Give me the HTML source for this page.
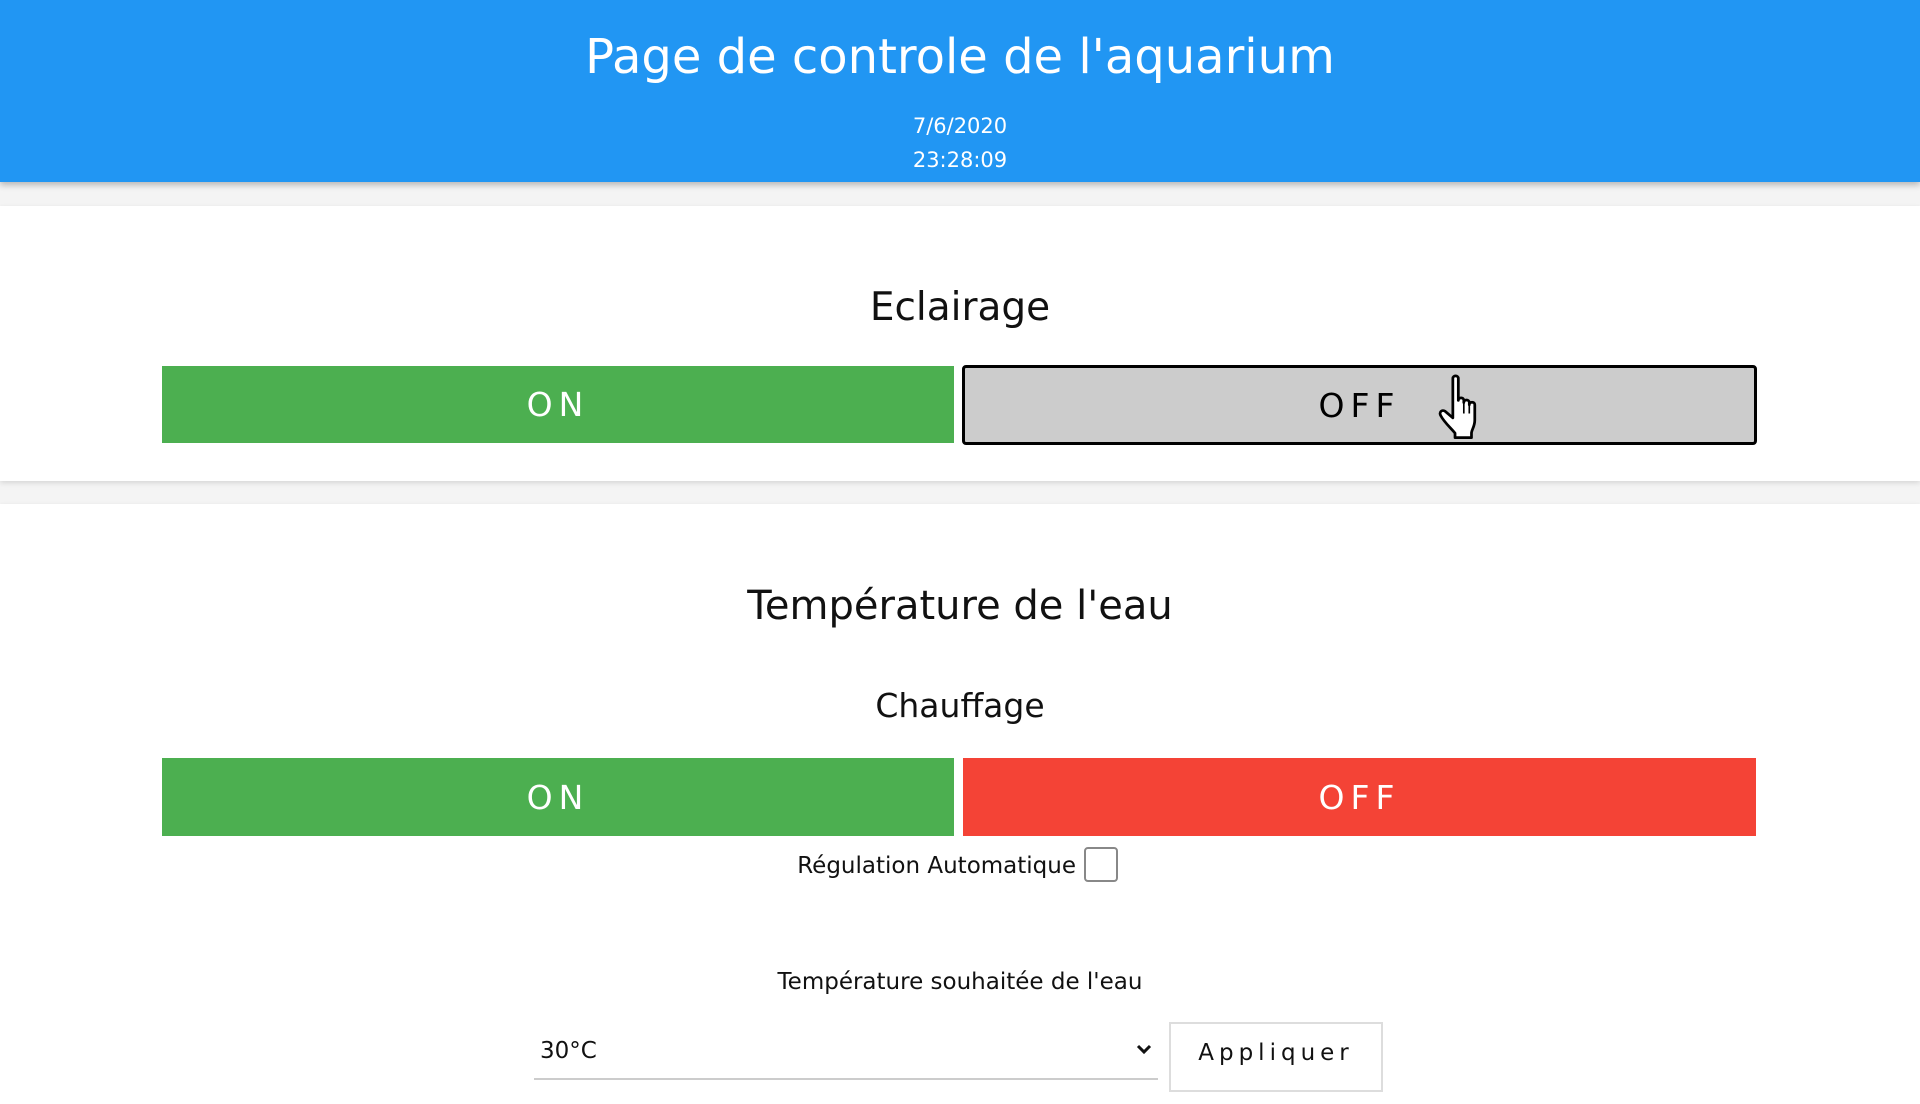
<!DOCTYPE html>
<html><head><meta charset="utf-8"><style>
body{margin:0;width:1920px;height:1080px;overflow:hidden;background:#f4f4f4;font-family:"Segoe UI","DejaVu Sans","Liberation Sans",sans-serif;position:relative}
.abs{position:absolute}
.c{left:0;width:1920px;text-align:center;white-space:nowrap}
#hdr{left:0;top:0;width:1920px;height:182px;background:#2196f3;box-shadow:0 3px 6px rgba(0,0,0,.25)}
.card{left:0;width:1920px;background:#fff;box-shadow:0 2px 5px rgba(0,0,0,.12)}
.btn{display:flex;align-items:center;justify-content:center;font-size:33px;letter-spacing:6px;box-sizing:border-box}
</style></head><body>
<div id="hdr" class="abs"></div>
<div class="abs c" style="top:23px;font-size:48px;color:#fff;line-height:68px">Page de controle de l'aquarium</div>
<div class="abs c" style="top:112px;font-size:21px;color:#fff;line-height:28px">7/6/2020</div>
<div class="abs c" style="top:146px;font-size:21px;color:#fff;line-height:28px">23:28:09</div>
<div class="abs card" style="top:206px;height:275px"></div>
<div class="abs card" style="top:504px;height:600px"></div>
<div class="abs c" style="top:280px;font-size:39px;line-height:56px;color:#111">Eclairage</div>
<div class="abs btn" style="left:162px;top:366px;width:792px;height:77px;background:#4caf50;color:#fff">ON</div>
<div class="abs btn" style="left:962px;top:365px;width:795px;height:80px;background:#ccc;color:#000;border:3px solid #000;border-radius:4px">OFF</div>
<svg class="abs" style="left:1434px;top:374px" width="64" height="68" viewBox="0 0 56 62"><path d="M16 4c0-3 5-3 5 0v20c0-3 5-3 5 0v2c0-3 5-3 5 0v2c0-3 5-3 5 0v14c0 6-3 9-3 12v4H18v-4c-3-4-10-10-13-16-2-3 1-6 4-4l7 6z" fill="#fff" stroke="#000" stroke-width="2.5" stroke-linejoin="round"/><path d="M26 26v10M31 28v8M36 30v6" stroke="#000" stroke-width="1.5"/></svg>
<div class="abs c" style="top:578px;font-size:40px;line-height:56px;color:#111">Température de l'eau</div>
<div class="abs c" style="top:683px;font-size:33px;line-height:46px;color:#111">Chauffage</div>
<div class="abs btn" style="left:162px;top:758px;width:792px;height:78px;background:#4caf50;color:#fff">ON</div>
<div class="abs btn" style="left:963px;top:758px;width:793px;height:78px;background:#f44336;color:#fff">OFF</div>
<div class="abs" style="left:676px;width:400px;text-align:right;top:851px;font-size:23px;line-height:30px;color:#111;white-space:nowrap">Régulation Automatique</div>
<div class="abs" style="left:1084px;top:847px;width:34px;height:35px;border:2px solid #888;border-radius:4px;box-sizing:border-box;background:#fff"></div>
<div class="abs c" style="top:967px;font-size:23px;line-height:30px;color:#111">Température souhaitée de l'eau</div>
<div class="abs" style="left:534px;top:1030px;width:624px;height:48px;border-bottom:2px solid #ccc"></div>
<div class="abs" style="left:540px;top:1036px;font-size:23px;line-height:30px;color:#111">30°C</div>
<svg class="abs" style="left:1136px;top:1044px" width="16" height="12" viewBox="0 0 16 12"><path d="M2 2l6 6 6-6" fill="none" stroke="#111" stroke-width="3"/></svg>
<div class="abs" style="left:1169px;top:1022px;width:214px;height:70px;border:2px solid #ddd;box-sizing:border-box;background:#fff"></div>
<div class="abs" style="left:1169px;top:1038px;width:214px;text-align:center;font-size:23px;line-height:30px;letter-spacing:5px;color:#111">Appliquer</div>
</body></html>
